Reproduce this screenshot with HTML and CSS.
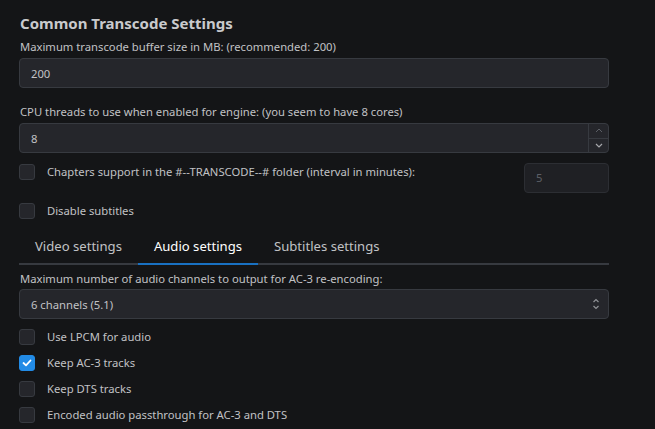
FILE: index.html
```html
<!DOCTYPE html>
<html>
<head>
<meta charset="utf-8">
<link rel="stylesheet" href="styles.css">
</head>
<body>
<div class="page">
  <h2 class="title">Common Transcode Settings</h2>
  <div class="field">
    <label class="label">Maximum transcode buffer size in MB: (recommended: 200)</label>
    <div class="input"><span>200</span></div>
  </div>
  <div class="field field-gap">
    <label class="label">CPU threads to use when enabled for engine: (you seem to have 8 cores)</label>
    <div class="input number">
      <span>8</span>
      <div class="spin">
        <div class="spin-btn"><svg width="8" height="5" viewBox="0 0 8 5"><path d="M1 4 L4 1 L7 4" fill="none" stroke="#5c5f66" stroke-width="1"/></svg></div>
        <div class="spin-btn"><svg width="8" height="5" viewBox="0 0 8 5"><path d="M1 1 L4 4 L7 1" fill="none" stroke="#a6a7ab" stroke-width="1.2"/></svg></div>
      </div>
    </div>
  </div>
  <div class="check-row chapters">
    <span class="box"></span>
    <span class="check-label">Chapters support in the #--TRANSCODE--# folder (interval in minutes):</span>
    <div class="input small disabled"><span>5</span></div>
  </div>
  <div class="check-row">
    <span class="box"></span>
    <span class="check-label">Disable subtitles</span>
  </div>
  <div class="tabs">
    <div class="tab">Video settings</div>
    <div class="tab active">Audio settings</div>
    <div class="tab">Subtitles settings</div>
  </div>
  <div class="field audio-field">
    <label class="label">Maximum number of audio channels to output for AC-3 re-encoding:</label>
    <div class="input select">
      <span>6 channels (5.1)</span>
      <svg class="chev" width="8" height="14" viewBox="0 0 8 14"><path d="M1.5 5 L4 2.5 L6.5 5 M1.5 9 L4 11.5 L6.5 9" fill="none" stroke="#909296" stroke-width="1.2"/></svg>
    </div>
  </div>
  <div class="checks">
    <div class="check-row"><span class="box"></span><span class="check-label">Use LPCM for audio</span></div>
    <div class="check-row"><span class="box checked"><svg width="10" height="8" viewBox="0 0 10 8"><path d="M1.5 4 L4 6.3 L8.5 1.5" fill="none" stroke="#fff" stroke-width="1.8" stroke-linecap="round" stroke-linejoin="round"/></svg></span><span class="check-label">Keep AC-3 tracks</span></div>
    <div class="check-row"><span class="box"></span><span class="check-label">Keep DTS tracks</span></div>
    <div class="check-row"><span class="box"></span><span class="check-label">Encoded audio passthrough for AC-3 and DTS</span></div>
  </div>
</div>
</body>
</html>
```
FILE: styles.css
```css
html, body {
  margin: 0;
  padding: 0;
  background: #141517;
}
body {
  font-family: "Noto Sans", "Open Sans", sans-serif;
  color: #c1c2c5;
  font-size: 11.25px;
}
.page {
  width: 590px;
  padding: 11px 0 0 19px;
}
.title {
  margin: 0 0 3px 1px;
  font-size: 15px;
  line-height: 24px;
  font-weight: 700;
  color: #c9cacd;
}
.field {
  display: flex;
  flex-direction: column;
}
.field-gap {
  margin-top: 15px;
}
.label {
  margin: 0 0 3px 1px;
  line-height: 17px;
  height: 17px;
}
.input {
  box-sizing: border-box;
  height: 30px;
  background: #25262b;
  border: 1px solid #373a40;
  border-radius: 4px;
  display: flex;
  align-items: center;
  padding-left: 11px;
  color: #c1c2c5;
}
.input span {
  flex: 1;
}
.number {
  padding-right: 0;
}
.spin {
  width: 19px;
  height: 28px;
  display: flex;
  flex-direction: column;
  border-left: 1px solid #373a40;
}
.spin-btn {
  flex: 1;
  display: flex;
  align-items: center;
  justify-content: center;
}
.spin-btn + .spin-btn {
  border-top: 1px solid #373a40;
}
.check-row {
  display: flex;
  align-items: flex-start;
  gap: 12px;
  line-height: 16px;
}
.chapters {
  margin-top: 10px;
}
.chapters .box {
  margin-top: 1px;
}
.chapters .check-label {
  line-height: 18px;
  flex: 1;
}
.chapters + .check-row {
  margin-top: 10px;
}
.box {
  box-sizing: border-box;
  width: 16px;
  height: 16px;
  flex: none;
  border-radius: 3px;
  background: #25262b;
  border: 1px solid #373a40;
  display: flex;
  align-items: center;
  justify-content: center;
}
.box.checked {
  background: #228be6;
  border-color: #228be6;
}
.check-label {
  white-space: nowrap;
}
.small {
  width: 85px;
  flex: none;
}
.disabled {
  background: #1f2024;
  border-color: #2c2e33;
  color: #5c5f66;
}
.tabs {
  display: flex;
  margin-top: 10px;
  border-bottom: 2px solid #373a40;
}
.tab {
  font-size: 13.1px;
  line-height: 20px;
  padding: 7px 16px;
  margin-bottom: -2px;
  border-bottom: 2px solid transparent;
  color: #c1c2c5;
}
.tab.active {
  color: #fff;
  border-bottom-color: #1971c2;
}
.audio-field .label {
  margin-top: 5px;
  margin-bottom: 2px;
}
.select {
  padding-right: 8px;
}
.checks {
  margin-top: 10px;
  display: flex;
  flex-direction: column;
  gap: 10px;
}
```
